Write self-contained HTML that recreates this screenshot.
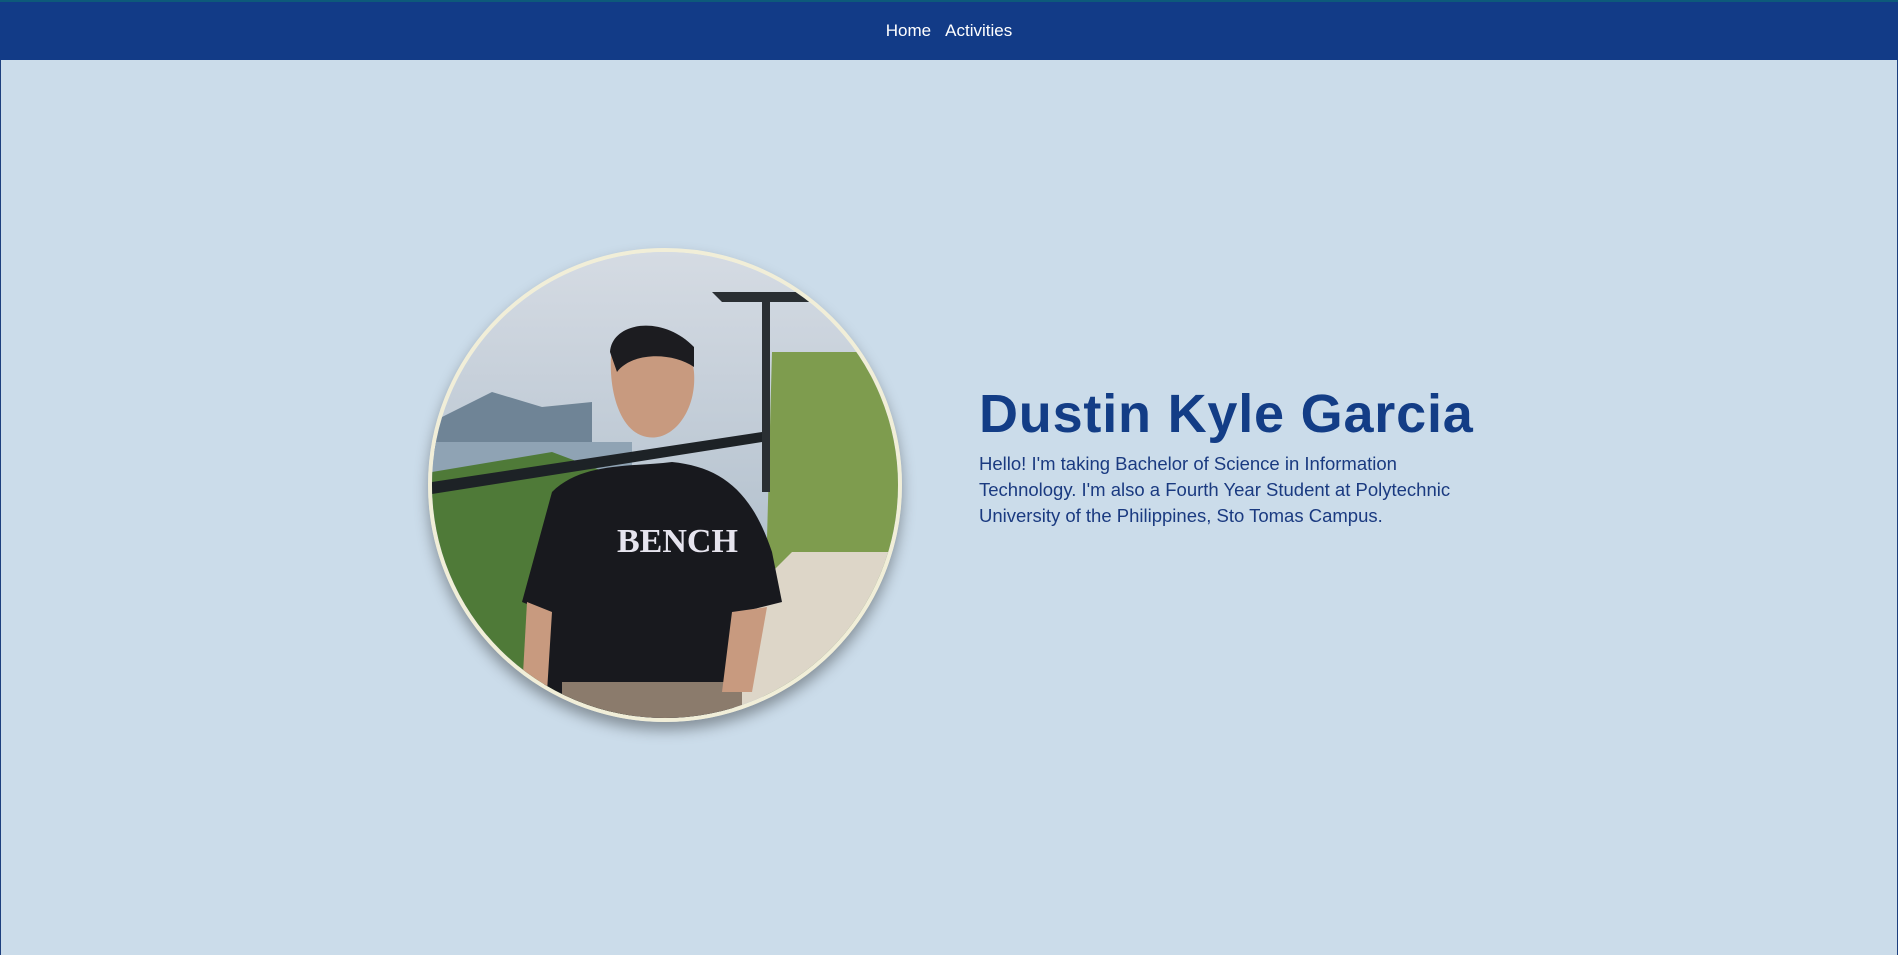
<!DOCTYPE html>
<html><head><meta charset="utf-8"><style>
html,body{margin:0;padding:0;width:1898px;height:955px;overflow:hidden;background:#cbdcea;font-family:"Liberation Sans",sans-serif}
.page{position:absolute;left:0;top:0;width:1896px;height:955px;border-left:1px solid #1d3f7e;border-right:1px solid #1d3f7e;}
nav{position:absolute;left:0;top:0;width:1898px;height:60px;background:#123b87;border-top:2px solid #0d5a7a;box-sizing:border-box;text-align:center;}
nav a{color:#fff;text-decoration:none;font-size:17px;line-height:58px;margin:0 7px}
.pic{position:absolute;left:428px;top:248px;width:474px;height:474px;border-radius:50%;border:4px solid #f1eed8;box-sizing:border-box;overflow:hidden;box-shadow:0 8px 14px rgba(0,0,0,.35)}
h1{position:absolute;left:979px;top:383px;margin:0;font-size:54px;font-weight:bold;color:#133d86;letter-spacing:0.8px}
p{position:absolute;left:979px;top:451px;margin:0;width:512px;font-size:18.5px;line-height:26px;color:#1a3a80}
</style></head><body>
<div class="page"></div>
<nav><a>Home</a><a>Activities</a></nav>
<div class="pic">
<svg width="474" height="474" viewBox="0 0 474 474">
<defs><linearGradient id="sky" x1="0" y1="0" x2="0" y2="1"><stop offset="0" stop-color="#d5dbe3"/><stop offset="0.4" stop-color="#c0cbd6"/><stop offset="1" stop-color="#9fb1c0"/></linearGradient></defs>
<rect width="474" height="474" fill="url(#sky)"/>
<path d="M0 170 L60 140 L110 155 L160 150 L160 200 L0 200Z" fill="#6f8496"/>
<rect x="0" y="190" width="200" height="40" fill="#8fa3b4"/>
<path d="M0 220 L120 200 L200 230 L200 474 L0 474Z" fill="#4f7a38"/>
<path d="M340 100 L474 100 L474 474 L330 474Z" fill="#7e9c4e"/>
<path d="M280 40 L420 40 L420 50 L290 50Z" fill="#2a2f33"/>
<rect x="330" y="40" width="8" height="200" fill="#2a2f33"/>
<path d="M0 230 L330 180 L330 190 L0 242Z" fill="#1d2226"/>
<path d="M360 300 L474 300 L474 474 L300 474 L330 330Z" fill="#ddd6c8"/>
<path d="M180 95 C200 70 260 80 262 120 C265 160 240 190 215 185 C185 180 175 130 180 95Z" fill="#c89a7f"/>
<path d="M178 100 C180 70 230 62 262 95 L262 115 C240 100 200 100 185 120Z" fill="#1c1c20"/>
<path d="M120 240 C150 210 200 215 240 210 C290 215 320 240 340 300 L350 350 L310 360 L300 474 L110 474 L115 360 L90 350 Z" fill="#18191e"/>
<text x="185" y="300" font-family="Liberation Serif" font-weight="bold" font-size="34" fill="#e6e4ee">BENCH</text>
<rect x="130" y="430" width="180" height="44" fill="#8b7b6c"/>
<path d="M95 350 L120 360 L115 440 L90 440Z" fill="#c89a7f"/>
<path d="M300 360 L335 355 L320 440 L290 440Z" fill="#c89a7f"/>
</svg>
</div>
<h1>Dustin Kyle Garcia</h1>
<p>Hello! I'm taking Bachelor of Science in Information Technology. I'm also a Fourth Year Student at Polytechnic University of the Philippines, Sto Tomas Campus.</p>
</body></html>
